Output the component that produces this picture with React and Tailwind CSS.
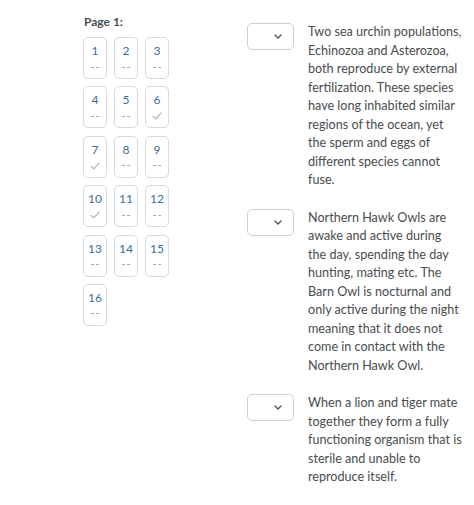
import React from 'react';

const cards = [
  { n: 1 }, { n: 2 }, { n: 3 },
  { n: 4 }, { n: 5 }, { n: 6, done: true },
  { n: 7, done: true }, { n: 8 }, { n: 9 },
  { n: 10, done: true }, { n: 11 }, { n: 12 },
  { n: 13 }, { n: 14 }, { n: 15 },
  { n: 16 },
];

const items = [
  'Two sea urchin populations, Echinozoa and Asterozoa, both reproduce by external fertilization. These species have long inhabited similar regions of the ocean, yet the sperm and eggs of different species cannot fuse.',
  'Northern Hawk Owls are awake and active during the day, spending the day hunting, mating etc. The Barn Owl is nocturnal and only active during the night meaning that it does not come in contact with the Northern Hawk Owl.',
  'When a lion and tiger mate together they form a fully functioning organism that is sterile and unable to reproduce itself.',
];

function Check() {
  return (
    <svg width="10" height="8" viewBox="0 0 10 8" fill="none">
      <path d="M1 4.4 L3.8 6.8 L9 1.2" stroke="#b0b3b5" strokeWidth="1.2" strokeLinecap="round" strokeLinejoin="round" />
    </svg>
  );
}

function Chevron() {
  return (
    <svg width="8" height="5" viewBox="0 0 8 5" fill="none">
      <path d="M1 1 L4 4 L7 1" stroke="#494c4e" strokeWidth="1.3" strokeLinecap="round" strokeLinejoin="round" />
    </svg>
  );
}

export default function App() {
  return (
    <div className="w-[474px] h-[505px] bg-white flex pl-[83px] pt-[14px]" style={{ fontFamily: 'Lato, "Open Sans", sans-serif' }}>
      <div className="w-[164px] shrink-0">
        <div className="text-[12px] font-bold text-[#494c4e] leading-[16px] pl-[1px]">Page 1:</div>
        <div className="grid grid-cols-[24px_24px_24px] gap-x-[7px] gap-y-[7.4px] mt-[7px]">
          {cards.map(c => (
            <div key={c.n} className="h-[42px] border border-[#d6d9dc] rounded-[5px] flex flex-col items-center">
              <span className="text-[12px] leading-[14px] mt-[6px] text-[#3a6d97]">{c.n}</span>
              <div className="h-[10px] mt-[4px] flex items-center">
                {c.done ? <Check /> : (
                  <div className="flex gap-[1.5px]">
                    <span className="w-[3.5px] h-[1px] bg-[#a9acae]" />
                    <span className="w-[3.5px] h-[1px] bg-[#a9acae]" />
                  </div>
                )}
              </div>
            </div>
          ))}
        </div>
      </div>
      <div className="flex flex-col gap-[19px] pt-[9px]">
        {items.map((t, i) => (
          <div key={i} className="flex gap-[14px]">
            <div className="w-[47px] h-[27px] shrink-0 border border-[#cdd0d2] rounded-[5px] flex items-center justify-end pr-[11px]">
              <Chevron />
            </div>
            <p className="w-[154px] text-[12.6px] leading-[18.5px] text-[#494c4e]">{t}</p>
          </div>
        ))}
      </div>
    </div>
  );
}
